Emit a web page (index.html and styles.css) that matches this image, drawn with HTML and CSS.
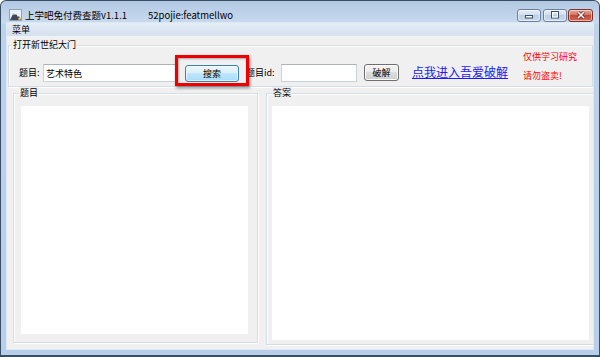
FILE: index.html
```html
<!DOCTYPE html>
<html lang="zh-CN">

<head>
    <meta charset="UTF-8">
    <meta name="viewport" content="width=device-width, initial-scale=1.0">
    <title>上学吧免付费查题v1.1.1</title>
    <link rel="stylesheet" href="styles.css">
</head>

<body>
    <div class="window">
        <div class="titlebar">
            <svg class="app-icon" width="13" height="12" viewBox="0 0 13 12">
                <rect x="0.5" y="0.5" width="12" height="11" fill="#eaf1f9" stroke="#8ea3ba" />
                <path d="M1 11 L4.5 4 L6 6 L7 5 L9 8 L10 7 L12 11 Z" fill="#3b4958" />
                <path d="M4.5 4 L5.4 5.8 L4.2 5.4 L3.6 5.8 Z" fill="#ffffff" />
                <circle cx="10.5" cy="9.8" r="1.3" fill="#e9c23c" />
            </svg>
            <span class="title">上学吧免付费查题v1.1.1</span>
            <span class="title-sub">52pojie:featmellwo</span>
            <div class="caption-btns">
                <span class="cap-btn">
                    <svg width="10" height="8" viewBox="0 0 10 8">
                        <rect x="1.5" y="4.5" width="7" height="2.5" fill="#fff" stroke="#3a4d63" />
                    </svg>
                </span>
                <span class="cap-btn">
                    <svg width="10" height="8" viewBox="0 0 10 8">
                        <rect x="1.5" y="0.5" width="7" height="6.5" fill="none" stroke="#3a4d63" />
                        <rect x="2.5" y="1.5" width="5" height="4.5" fill="none" stroke="#fff" />
                        <rect x="3.5" y="3.5" width="3" height="1.5" fill="#b9cce3" />
                    </svg>
                </span>
                <span class="cap-btn cap-close">
                    <svg width="10" height="8" viewBox="0 0 10 8">
                        <path d="M2 1 L8 7 M8 1 L2 7" stroke="#6b2119" stroke-width="3" />
                        <path d="M2 1 L8 7 M8 1 L2 7" stroke="#fff" stroke-width="1.6" />
                    </svg>
                </span>
            </div>
        </div>

        <div class="client">
            <div class="menubar"><span>菜单</span></div>

            <fieldset class="group top-group">
                <legend>打开新世纪大门</legend>
                <div class="search-row">
                    <label class="lbl lbl-q">题目:</label>
                    <input class="field field-q" type="text" value="艺术特色">
                    <span class="highlight-wrap">
                        <button class="btn btn-search">搜索</button>
                        <span class="highlight"></span>
                    </span>
                    <label class="lbl lbl-id">题目id:</label>
                    <input class="field field-id" type="text">
                    <button class="btn btn-crack">破解</button>
                    <a class="link" href="#">点我进入吾爱破解</a>
                    <div class="notice">
                        <span>仅供学习研究</span>
                        <span>请勿盗卖!</span>
                    </div>
                </div>
            </fieldset>

            <div class="panels">
                <fieldset class="group panel panel-q">
                    <legend>题目</legend>
                    <div class="textarea"></div>
                </fieldset>
                <fieldset class="group panel panel-a">
                    <legend>答案</legend>
                    <div class="textarea"></div>
                </fieldset>
            </div>
        </div>
    </div>
</body>

</html>
```

FILE: styles.css
```css
* {
    box-sizing: border-box;
}

body {
    margin: 0;
    font-family: "Noto Sans CJK SC", "Liberation Sans", sans-serif;
    font-size: 9px;
    color: #000;
    background: #fff;
}

/* window frame */
.window {
    width: 600px;
    height: 357px;
    border: 1px solid #3a4e63;
    border-bottom-width: 2px;
    border-radius: 6px 6px 0 0;
    background: linear-gradient(#b3c9e3, #c8daef 22px, #bdd3eb 23px, #b8cfe9);
    display: flex;
    flex-direction: column;
    overflow: hidden;
}

.titlebar {
    height: 22px;
    flex-shrink: 0;
    display: flex;
    align-items: center;
    padding: 6px 6px 0 8px;
    font-size: 9.5px;
}

.app-icon {
    flex-shrink: 0;
}

.title {
    margin-left: 3px;
    width: 123px;
}

.caption-btns {
    margin-left: auto;
    display: flex;
    gap: 1px;
}

.cap-btn {
    width: 24px;
    height: 13px;
    border: 1px solid #6b819b;
    border-radius: 3px;
    background: linear-gradient(#e6eef8, #cddcee 50%, #bccfe6 50%, #cadbef);
    box-shadow: inset 0 0 0 1px rgba(255, 255, 255, 0.5);
    display: flex;
    align-items: center;
    justify-content: center;
}

.cap-btn:first-child {
    margin-right: 1px;
}

.cap-close {
    width: 25px;
    border-color: #7d3128;
    background: linear-gradient(#e4a69b, #d0705f 50%, #c2493a 50%, #d36a57);
}

/* client area */
.client {
    flex: 1;
    margin: 0 6px 6px 6px;
    background: #f0f0f0;
    box-shadow: 0 0 0 1px #dde8f4;
    overflow: hidden;
}

.menubar {
    height: 14px;
    line-height: 13px;
    padding-left: 5px;
    background: linear-gradient(#e4ecf6, #d5e0ee);
    border-bottom: 1px solid #eef3f9;
}

.group {
    margin: 0;
    min-width: 0;
    border: 1px solid #d3dde7;
    box-shadow: 1px 1px 0 #fff, inset 1px 1px 0 #fff;
}

.group legend {
    padding: 0 1px;
    line-height: 12px;
    background: #f0f0f0;
}

.top-group {
    margin: 2px 0 0 1px;
    padding: 0 0 4px 3px;
}

.search-row {
    display: flex;
    align-items: flex-end;
    padding-left: 7px;
}

.lbl {
    flex-shrink: 0;
    line-height: 18px;
}

.lbl-q {
    width: 24px;
}

.lbl-id {
    width: 35px;
    margin-left: 7px;
}

.field {
    flex-shrink: 0;
    height: 18px;
    margin: 0;
    padding: 0 2px;
    font: inherit;
    background: #fff;
    border: 1px solid #c9d0d8;
    border-top-color: #abb2bb;
    outline: none;
}

.field-q {
    width: 133px;
}

.field-id {
    width: 76px;
}

.btn {
    height: 17px;
    margin: 0;
    padding: 0;
    font: inherit;
    color: #000;
    border-radius: 3px;
    cursor: pointer;
}

.highlight-wrap {
    position: relative;
    display: flex;
    margin-left: 9px;
}

.btn-search {
    width: 54px;
    border: 1px solid #3c7fb1;
    background: linear-gradient(#eaf6fd, #d9f0fc 50%, #bee6fd 50%, #a9dbf6);
    box-shadow: inset 0 0 0 1px rgba(255, 255, 255, 0.6);
}

/* red annotation frame over the search button */
.highlight {
    position: absolute;
    left: -10px;
    top: -10px;
    width: 74px;
    height: 31px;
    border: 3px solid #ec0000;
    box-shadow: 1px 2px 3px rgba(0, 0, 0, 0.45), inset 1px 1px 2px rgba(0, 0, 0, 0.3);
    pointer-events: none;
}

.btn-crack {
    width: 35px;
    margin-left: 7px;
    margin-bottom: 1px;
    border: 1px solid #707070;
    background: linear-gradient(#f4f4f4, #ebebeb 50%, #dddddd 50%, #cfcfcf);
    box-shadow: inset 0 0 0 1px #fbfbfb;
}

.link {
    flex-shrink: 0;
    margin-left: 13px;
    margin-bottom: 3px;
    font-size: 12px;
    line-height: 14px;
    color: #1b1bf5;
    text-decoration: underline;
}

.notice {
    display: flex;
    flex-direction: column;
    gap: 7px;
    margin-left: 15px;
    color: #ff0000;
    line-height: 12px;
}

/* lower panels */
.panels {
    display: flex;
    align-items: flex-start;
    gap: 8px;
    margin-left: 6px;
}

.panel {
    flex-shrink: 0;
    padding: 7px 0 0 5px;
}

.panel-q {
    width: 245px;
    padding-bottom: 8px;
}

.panel-q .textarea {
    width: 227px;
    height: 228px;
    margin-left: 2px;
}

.panel-a {
    width: 328px;
    padding-bottom: 4px;
}

.panel-a .textarea {
    width: 317px;
    height: 234px;
}

.textarea {
    background: #fff;
}
```
